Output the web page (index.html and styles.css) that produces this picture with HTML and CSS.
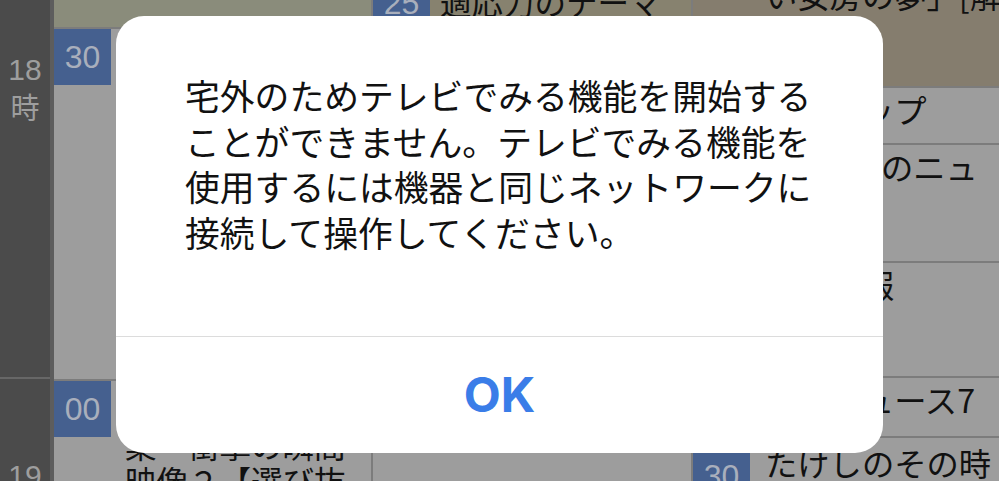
FILE: index.html
```html
<!DOCTYPE html>
<html lang="ja">
<head>
<meta charset="utf-8">
<link rel="stylesheet" href="styles.css">
</head>
<body>
<div class="screen">
  <div class="timecol">
    <div class="hour hour-18"><span>18</span><span class="ji">時</span></div>
    <div class="hour hour-19"><span>19</span><span class="ji">時</span></div>
  </div>

  <div class="col col1">
    <div class="prog band-green h-c1a"></div>
    <div class="prog h-c1b">
      <span class="badge">30</span>
      <p class="title">ニュース</p>
    </div>
    <div class="prog h-c1c">
      <span class="badge">00</span>
      <p class="title">ドキュメント特<br>集・衝撃の瞬間<br>映像２【選び抜<br>かれた決定版】</p>
    </div>
  </div>

  <div class="col col2">
    <div class="prog band-olive h-c2a">
      <span class="badge">25</span>
      <p class="title">適応力のテーマ</p>
    </div>
    <div class="prog h-c2b">
      <span class="badge">00</span>
      <p class="title">ニュース</p>
    </div>
  </div>

  <div class="col col3">
    <div class="prog band-taupe h-c3a">
      <p class="title pad top-cut">い女房の夢」[解</p>
    </div>
    <div class="prog h-c3b"><p class="title pad">情報トップ</p></div>
    <div class="prog h-c3c"><p class="title pad shift">ＪＮＮのニュ<br>ース</p></div>
    <div class="prog h-c3d"><p class="title pad">気象情報</p></div>
    <div class="prog h-c3e"><p class="title pad">ＮＨニュース7</p></div>
    <div class="prog h-c3f">
      <span class="badge badge-low">30</span>
      <p class="title">たけしのその時</p>
    </div>
  </div>
</div>

<div class="alert">
  <div class="alert-body">
    <p class="message">宅外のためテレビでみる機能を開始する<br>ことができません。テレビでみる機能を<br>使用するには機器と同じネットワークに<br>接続して操作してください。</p>
  </div>
  <div class="alert-actions">
    <span class="ok">OK</span>
  </div>
</div>
</body>
</html>
```

FILE: styles.css
```css
html, body {
  margin: 0;
  padding: 0;
}

body {
  width: 999px;
  height: 481px;
  overflow: hidden;
  position: relative;
  background: #9d9d9d;
  font-family: "Noto Sans CJK JP", "Noto Sans", sans-serif;
}

.screen {
  display: flex;
  height: 481px;
  overflow: hidden;
}

.timecol {
  width: 50px;
  flex: none;
  background: #4b4b4b;
  border-right: 4px solid #5d5d5d;
  display: flex;
  flex-direction: column;
}

.hour {
  display: flex;
  flex-direction: column;
  align-items: center;
  color: #9e9e9e;
  font-family: "Liberation Sans", Arial, sans-serif;
  font-size: 30px;
  line-height: 37px;
}

.hour .ji {
  font-family: "Noto Sans CJK JP", sans-serif;
  font-size: 29px;
}

.hour-18 {
  height: 379px;
  padding-top: 51px;
  box-sizing: border-box;
  border-bottom: 2px solid #676767;
  flex: none;
}

.hour-19 {
  padding-top: 78px;
}

.col {
  display: flex;
  flex-direction: column;
  flex: none;
  overflow: hidden;
}

.col1 {
  width: 317px;
  border-right: 2px solid #7c7c7c;
}

.col2 {
  width: 318px;
  border-right: 2px solid #7c7c7c;
}

.col3 {
  flex: 1;
}

.prog {
  position: relative;
  display: flex;
  align-items: flex-start;
  flex: none;
  background: #9d9d9d;
  border-bottom: 2px solid #7c7c7c;
  box-sizing: content-box;
  overflow: hidden;
}

.band-green { background: #8a8c7b; }
.band-olive { background: #87826f; }
.band-taupe { background: #857d6e; }

.h-c1a { height: 27px; }
.h-c1b { height: 350px; }
.h-c1c { height: 120px; border-bottom: none; }

.h-c2a { height: 300px; margin-top: -25px; }
.h-c2b { height: 220px; border-bottom: none; }

.h-c3a { height: 86px; }
.h-c3b { height: 55px; }
.h-c3c { height: 116px; }
.h-c3d { height: 113px; }
.h-c3e { height: 58px; }
.h-c3f { height: 60px; border-bottom: none; }

.badge {
  flex: none;
  width: 57px;
  height: 56px;
  background: #45608f;
  color: #a9afbc;
  font-family: "Liberation Sans", Arial, sans-serif;
  font-size: 32px;
  line-height: 56px;
  text-align: center;
}

.badge-low {
  margin-top: 10px;
}

.title {
  margin: 0;
  padding: 3px 8px 0 14px;
  color: #111;
  font-size: 31.5px;
  line-height: 36px;
  white-space: nowrap;
}

.h-c1c .title {
  padding-top: 9px;
}

.h-c2a .title {
  padding-top: 8px;
  padding-left: 10px;
}

.col3 .title {
  font-size: 32.3px;
}

.title.pad {
  padding-left: 72px;
}

.title.pad.shift {
  padding-left: 91px;
}

.top-cut {
  margin-top: -27px;
}

.h-c3f .title {
  padding-left: 15px;
  padding-top: 6px;
}

/* alert overlay */
.alert {
  position: absolute;
  left: 116px;
  top: 16px;
  width: 767px;
  height: 437px;
  background: #ffffff;
  border-radius: 28px;
  display: flex;
  flex-direction: column;
  overflow: hidden;
}

.alert-body {
  height: 321px;
  box-sizing: border-box;
  padding: 57px 0 0 69px;
  border-bottom: 1px solid #dcdcdc;
}

.message {
  margin: 0;
  color: #111;
  font-family: "Noto Sans CJK JP", sans-serif;
  font-size: 34.8px;
  line-height: 45.5px;
  white-space: nowrap;
}

.alert-actions {
  flex: 1;
  display: flex;
  align-items: center;
  justify-content: center;
}

.ok {
  color: #3a7de8;
  font-family: Inter, "Liberation Sans", sans-serif;
  font-weight: 700;
  font-size: 48px;
  line-height: 1;
}
```
